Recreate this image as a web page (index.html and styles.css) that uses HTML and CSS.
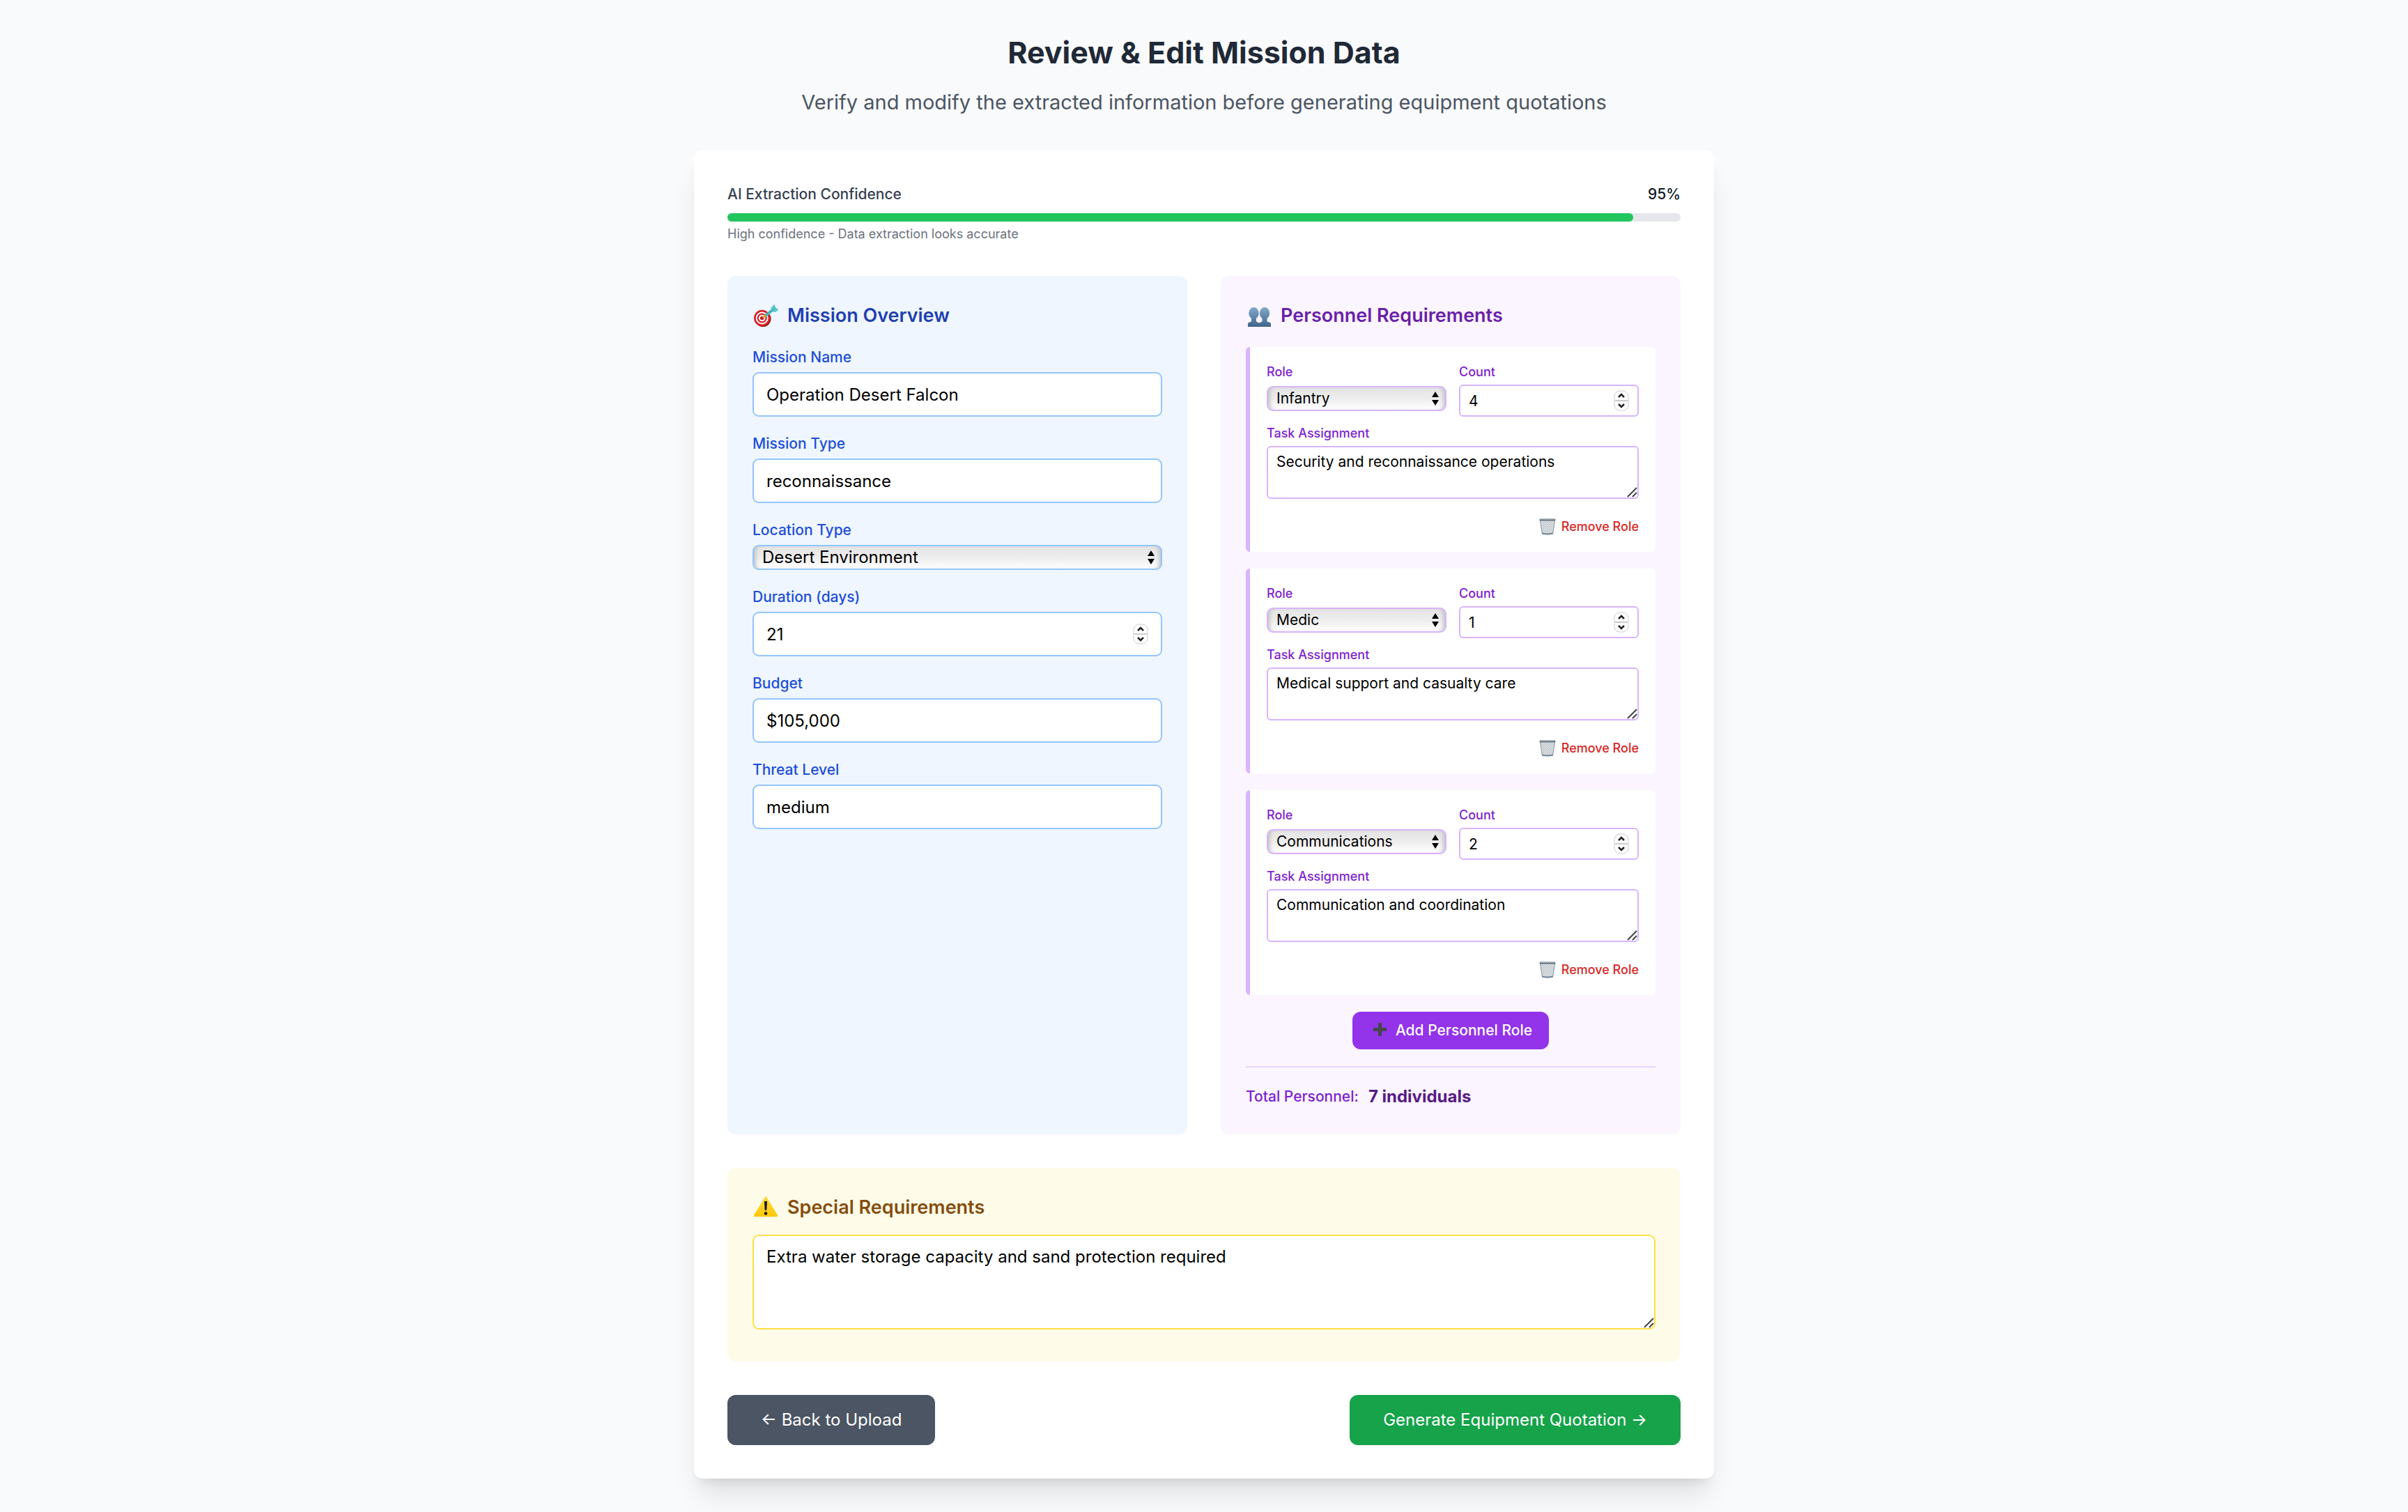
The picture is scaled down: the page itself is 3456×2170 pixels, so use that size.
FILE: index.html
```html
<!DOCTYPE html>
<html lang="en">
<head>
<meta charset="utf-8">
<meta name="viewport" content="width=device-width, initial-scale=1">
<title>Review &amp; Edit Mission Data</title>
<link rel="stylesheet" href="styles.css">
</head>
<body>
<svg class="sprite" aria-hidden="true">
  <defs>
    <linearGradient id="g-bust" gradientUnits="userSpaceOnUse" x1="0" y1="5" x2="0" y2="33"><stop offset="0" stop-color="#82aac9"/><stop offset="1" stop-color="#40648a"/></linearGradient>
    <linearGradient id="g-warn" x1="0" y1="0" x2="0" y2="1"><stop offset="0" stop-color="#fddc3a"/><stop offset="1" stop-color="#fdc70a"/></linearGradient>
    <pattern id="p-mesh" width="3" height="3" patternUnits="userSpaceOnUse"><rect width="3" height="3" fill="#e6e9ec"/><path d="M0 0l3 3M3 0l-3 3" stroke="#a9b1b9" stroke-width="0.6"/></pattern>
  </defs>
  <symbol id="i-trash" viewBox="0 0 24 24">
    <path d="M1 2.5h22l-3 19.5q-8 2.5-16 0z" fill="url(#p-mesh)"/>
    <path d="M1.5 3l3 19M22.5 3l-3 19" stroke="#8a949e" stroke-width="1" fill="none"/>
    <path d="M4 20.5q8 2 16 0v2q-8 2-16 0z" fill="#6f8296"/>
    <rect x="0.5" y="0.5" width="23" height="3" rx="1.5" fill="#64727f"/>
    <rect x="2" y="1" width="20" height="1" rx="0.5" fill="#9aa6b1"/>
  </symbol>
</svg>
<main class="page">
  <header class="page-header">
    <h1 class="title">Review &amp; Edit Mission Data</h1>
    <p class="subtitle">Verify and modify the extracted information before generating equipment quotations</p>
  </header>

  <form class="card">
    <section class="confidence">
      <div class="confidence-head"><span>AI Extraction Confidence</span><span class="confidence-value">95%</span></div>
      <div class="track"><div class="fill" style="width: 95%"></div></div>
      <p class="hint">High confidence - Data extraction looks accurate</p>
    </section>

    <div class="columns">
      <section class="panel panel-blue">
        <h2 class="heading">
          <svg class="emoji" viewBox="0 0 38 34" aria-hidden="true">
            <circle cx="15" cy="21.5" r="11.5" fill="#8f1016"/><circle cx="13.7" cy="20.500" r="11.700" fill="#d8232a"/>
            <circle cx="13.700" cy="20.500" r="9" fill="#fff"/><circle cx="13.700" cy="20.500" r="7" fill="#d3222a"/><circle cx="13.700" cy="20.500" r="4.800" fill="#fff"/><circle cx="13.700" cy="20.500" r="2.800" fill="#c81e26"/>
            <path d="M15 20l5-4" stroke="#e0a92c" stroke-width="3"/>
            <path d="M19 17l10-8.5" stroke="#41b9bd" stroke-width="4"/>
            <path d="M26 11l1-6 4.5-4.500 1.500 5 4.500 2.500-4 4z" fill="#5cc9cb"/>
            <path d="M26 11.500l7-6" stroke="#2b8d95" stroke-width="1"/>
          </svg>
          Mission Overview
        </h2>
        <div class="fields">
          <div class="field"><label for="name">Mission Name</label><input class="control" id="name" type="text" value="Operation Desert Falcon"></div>
          <div class="field"><label for="type">Mission Type</label><input class="control" id="type" type="text" value="reconnaissance"></div>
          <div class="field"><label for="location">Location Type</label><select class="control" id="location"><option>Desert Environment</option></select></div>
          <div class="field"><label for="duration">Duration (days)</label><input class="control" id="duration" type="number" value="21"></div>
          <div class="field"><label for="budget">Budget</label><input class="control" id="budget" type="text" value="$105,000"></div>
          <div class="field"><label for="threat">Threat Level</label><input class="control" id="threat" type="text" value="medium"></div>
        </div>
      </section>

      <section class="panel panel-purple">
        <h2 class="heading">
          <svg class="emoji" viewBox="0 0 38 34" aria-hidden="true">
            <g fill="url(#g-bust)">
              <ellipse cx="11.500" cy="13.500" rx="7.200" ry="8.500"/>
              <path d="M8 19h7v6.500l4 2V33H3v-4.500q0-1.500 2-2l3-1z"/>
              <ellipse cx="27" cy="13.500" rx="7.200" ry="8.500"/>
              <path d="M23.500 19h7v6.500l3 1q2.500.5 2.500 2V33H19v-5.500l4.500-2z"/>
            </g>
          </svg>
          Personnel Requirements
        </h2>
        <div class="roles">
          <article class="role">
            <div class="role-row">
              <div class="field"><label for="role1">Role</label><select class="control" id="role1"><option>Infantry</option></select></div>
              <div class="field"><label for="count1">Count</label><input class="control" id="count1" type="number" value="4"></div>
            </div>
            <div class="field"><label for="task1">Task Assignment</label><textarea class="control" id="task1" rows="2">Security and reconnaissance operations</textarea></div>
            <button class="remove" type="button"><svg class="trash" aria-hidden="true"><use href="#i-trash"/></svg>Remove Role</button>
          </article>
          <article class="role">
            <div class="role-row">
              <div class="field"><label for="role2">Role</label><select class="control" id="role2"><option>Medic</option></select></div>
              <div class="field"><label for="count2">Count</label><input class="control" id="count2" type="number" value="1"></div>
            </div>
            <div class="field"><label for="task2">Task Assignment</label><textarea class="control" id="task2" rows="2">Medical support and casualty care</textarea></div>
            <button class="remove" type="button"><svg class="trash" aria-hidden="true"><use href="#i-trash"/></svg>Remove Role</button>
          </article>
          <article class="role">
            <div class="role-row">
              <div class="field"><label for="role3">Role</label><select class="control" id="role3"><option>Communications</option></select></div>
              <div class="field"><label for="count3">Count</label><input class="control" id="count3" type="number" value="2"></div>
            </div>
            <div class="field"><label for="task3">Task Assignment</label><textarea class="control" id="task3" rows="2">Communication and coordination</textarea></div>
            <button class="remove" type="button"><svg class="trash" aria-hidden="true"><use href="#i-trash"/></svg>Remove Role</button>
          </article>
          <button class="add" type="button"><svg class="plus" viewBox="0 0 30 24" aria-hidden="true"><path d="M15.5 1v19M6 10.5h19" stroke="#45454b" stroke-width="5"/></svg>Add Personnel Role</button>
        </div>
        <p class="total">Total Personnel: <strong>7 individuals</strong></p>
      </section>
    </div>

    <section class="panel panel-yellow">
      <h2 class="heading">
        <svg class="emoji" viewBox="0 0 38 34" aria-hidden="true">
          <path d="M17.5 2.500q1.500-2.500 3 0L36 28q1 2-1.500 2.300h-31Q1 30 2 28z" fill="url(#g-warn)"/>
          <path d="M17 8h4l-.7 13h-2.600z" fill="#15120c"/><circle cx="19" cy="25.500" r="2.300" fill="#15120c"/>
        </svg>
        <label for="special">Special Requirements</label>
      </h2>
      <textarea class="control" id="special" rows="3">Extra water storage capacity and sand protection required</textarea>
    </section>

    <footer class="actions">
      <button class="btn btn-back" type="button">← Back to Upload</button>
      <button class="btn btn-go" type="submit">Generate Equipment Quotation →</button>
    </footer>
  </form>
</main>
</body>
</html>
```
FILE: styles.css
```css
*, *::before, *::after { box-sizing: border-box; }

body {
  margin: 0;
  background: #f9fafb;
  color: #111827;
  font: 24px/36px Inter, "Liberation Sans", sans-serif;
}

h1, h2, p { margin: 0; }
button, input, select, textarea { margin: 0; font: inherit; letter-spacing: inherit; }
button { border: 0; cursor: pointer; }

.sprite { position: absolute; width: 0; height: 0; }

.page { max-width: 1536px; margin: 0 auto; padding: 48px 36px; }

.page-header { display: grid; gap: 24px; margin-bottom: 48px; text-align: center; }
.title { color: #1f2937; font-size: 43px; line-height: 54px; font-weight: 700; }
.subtitle { color: #4b5563; font-size: 29px; line-height: 42px; }

.card {
  display: grid;
  gap: 48px;
  padding: 48px;
  border-radius: 12px;
  background: #fff;
  box-shadow: 0 30px 38px -8px rgba(0, 0, 0, 0.1), 0 12px 15px -9px rgba(0, 0, 0, 0.1);
}

.confidence-head {
  display: flex;
  justify-content: space-between;
  margin-bottom: 12px;
  color: #374151;
  font-size: 21px;
  line-height: 30px;
  font-weight: 500;
}
.confidence-value { color: #111827; }
.track { height: 12px; border-radius: 6px; background: #e5e7eb; }
.fill { height: 12px; border-radius: 6px; background: #22c55e; }
.hint { margin-top: 6px; color: #6b7280; font-size: 18px; line-height: 24px; }

.columns { display: grid; grid-template-columns: 1fr 1fr; gap: 48px; }

.panel { padding: 36px; border-radius: 12px; }
.panel-blue { --line: #93c5fd; --label: #1d4ed8; --head: #1e40af; background: #eff6ff; }
.panel-purple { --line: #d8b4fe; --label: #7e22ce; --head: #6b21a8; background: #faf5ff; }
.panel-yellow { --line: #fde047; --head: #854d0e; padding-bottom: 46px; background: #fefce8; }

.heading {
  display: flex;
  align-items: center;
  gap: 12px;
  margin-bottom: 24px;
  color: var(--head);
  font-size: 27px;
  line-height: 42px;
  font-weight: 600;
}
.panel-yellow .heading { margin-bottom: 18px; }
.emoji { width: 38px; height: 34px; }

.fields { display: grid; gap: 24px; }
.field { display: grid; align-content: start; gap: 6px; }
.field label { color: var(--label); font-size: 21px; line-height: 30px; font-weight: 500; }

.control {
  display: block;
  width: 100%;
  min-width: 0;
  padding: 12px 18px;
  border: 2px solid var(--line);
  border-radius: 9px;
  background-color: #fff;
  color: #000;
  line-height: 36px;
}
input.control { height: 64px; }
textarea.control { resize: vertical; }

select.control {
  appearance: none;
  height: 36px;
  padding: 0 48px 0 12px;
  line-height: 30px;
  background:
    url("data:image/svg+xml,%3Csvg xmlns='http://www.w3.org/2000/svg' width='12' height='20'%3E%3Cpath d='M6 0l5 8H1zM6 20l5-8H1z'/%3E%3C/svg%3E") no-repeat right 8px center,
    linear-gradient(#e4e4e4, #ededed 50%, #fff);
  box-shadow: inset 6px 0 6px -4px #bbb, inset -6px 0 6px -4px #bbb;
}

input[type="number"]::-webkit-inner-spin-button {
  appearance: none;
  opacity: 1;
  width: 22px;
  height: 30px;
  margin: 0;
  background: url("data:image/svg+xml,%3Csvg xmlns='http://www.w3.org/2000/svg' width='22' height='30'%3E%3Crect x='1' y='1' width='20' height='28' rx='8' fill='%23fff' stroke='%23ccc'/%3E%3Cpath d='M2 15h18' stroke='%23ccc' stroke-width='2'/%3E%3Cpath d='M7 10l4-4 4 4M7 20l4 4 4-4' fill='none' stroke='%23222' stroke-width='2.5'/%3E%3C/svg%3E") no-repeat center;
}

textarea::-webkit-resizer {
  background: url("data:image/svg+xml,%3Csvg xmlns='http://www.w3.org/2000/svg' width='15' height='15'%3E%3Cpath d='M1 14L14 1M8 14l6-6' stroke='%23444' stroke-width='2'/%3E%3C/svg%3E") no-repeat center;
}

.roles { display: grid; gap: 24px; }
.role {
  display: grid;
  gap: 12px;
  padding: 24px;
  border-left: 6px solid var(--line);
  border-radius: 6px;
  background: #fff;
}
.role-row { display: grid; grid-template-columns: 1fr 1fr; gap: 18px; }
.role label { font-size: 18px; line-height: 24px; }
.role .control { padding: 6px 12px; border-radius: 6px; font-size: 21px; line-height: 30px; }
.role input.control { height: 46px; }
.role select.control { margin-top: 2px; padding: 0 36px 0 12px; border-radius: 9px; }

.remove {
  display: flex;
  align-items: center;
  justify-self: end;
  gap: 8px;
  margin-top: 16px;
  padding: 0;
  background: none;
  color: #dc2626;
  font-size: 18px;
  line-height: 24px;
  font-weight: 500;
}
.trash { width: 24px; height: 24px; }

.add {
  display: flex;
  align-items: center;
  justify-self: center;
  gap: 8px;
  padding: 12px 24px;
  border-radius: 12px;
  background: #9333ea;
  color: #fff;
  font-size: 21px;
  line-height: 30px;
  font-weight: 500;
}
.plus { width: 30px; height: 24px; }

.total {
  display: flex;
  align-items: center;
  gap: 14px;
  margin-top: 24px;
  padding-top: 24px;
  border-top: 2px solid #e9d5ff;
  color: #7e22ce;
  font-size: 21px;
  font-weight: 500;
}
.total strong { color: #581c87; font-size: 24px; font-weight: 700; }

.actions { display: flex; justify-content: space-between; }
.btn { padding: 18px 48px; border-radius: 12px; color: #fff; }
.btn-back { background: #4b5563; }
.btn-go { background: #16a34a; }
```
